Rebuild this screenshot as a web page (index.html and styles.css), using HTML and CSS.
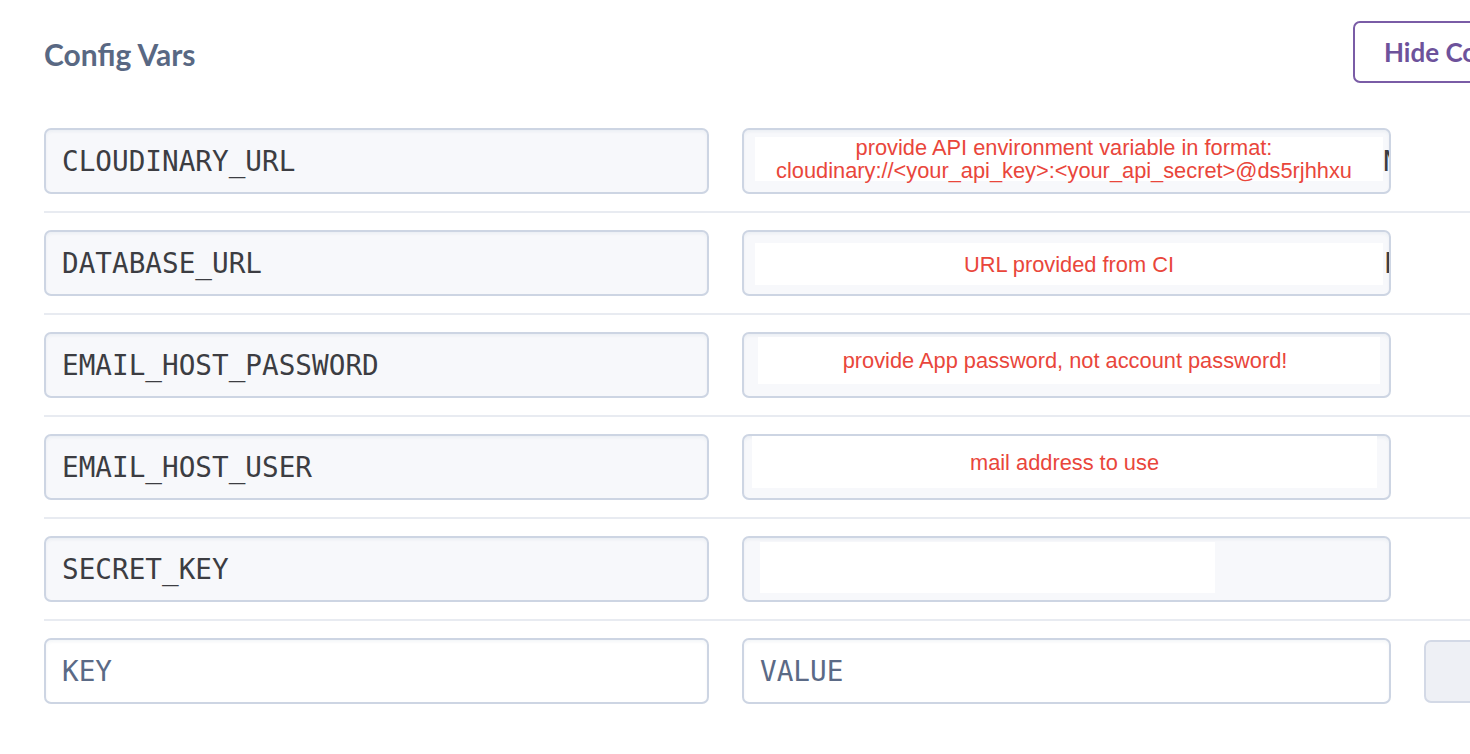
FILE: index.html
```html
<!DOCTYPE html>
<html lang="en">
<head>
<meta charset="utf-8">
<title>Config Vars</title>
<link rel="stylesheet" href="styles.css">
</head>
<body>
<section class="config">
  <header class="config-header">
    <h2 class="config-title">Config Vars</h2>
    <button class="hide-btn">Hide Config Vars</button>
  </header>

  <div class="var-row">
    <div class="field">CLOUDINARY_URL</div>
    <div class="field value">
      <span class="tail tail-1">N</span>
      <div class="note note-1">
        <span class="line">provide API environment variable in format:</span>
        <span class="line">cloudinary://&lt;your_api_key&gt;:&lt;your_api_secret&gt;@ds5rjhhxu</span>
      </div>
    </div>
  </div>

  <div class="var-row">
    <div class="field">DATABASE_URL</div>
    <div class="field value">
      <span class="tail tail-2">P</span>
      <div class="note note-2">URL provided from CI</div>
    </div>
  </div>

  <div class="var-row">
    <div class="field">EMAIL_HOST_PASSWORD</div>
    <div class="field value">
      <div class="note note-3">provide App password, not account password!</div>
    </div>
  </div>

  <div class="var-row">
    <div class="field">EMAIL_HOST_USER</div>
    <div class="field value">
      <div class="note note-4">mail address to use</div>
    </div>
  </div>

  <div class="var-row">
    <div class="field">SECRET_KEY</div>
    <div class="field value">
      <div class="note note-5"></div>
    </div>
  </div>

  <div class="var-row last">
    <div class="field empty">KEY</div>
    <div class="field empty">VALUE</div>
    <button class="add-btn">Add</button>
  </div>
</section>
</body>
</html>
```

FILE: styles.css
```css
html, body {
  margin: 0;
  padding: 0;
  background: #ffffff;
  overflow: hidden;
}

body {
  width: 1470px;
  height: 754px;
  font-family: Lato, "Open Sans", sans-serif;
}

.config {
  padding-left: 44px;
  width: 1640px;
}

.config-header {
  display: grid;
  grid-template-columns: 1309px auto;
  align-items: start;
  height: 111px;
}

.config-title {
  margin: 39px 0 0 0;
  font-family: Lato, "Open Sans", sans-serif;
  font-weight: 700;
  font-size: 30px;
  line-height: 30px;
  color: #596883;
}

.hide-btn {
  margin-top: 21px;
  height: 62px;
  box-sizing: border-box;
  border: 2px solid #7a5ca6;
  border-radius: 7px;
  background: #ffffff;
  padding: 0 30px 0 29px;
  font-family: Lato, "Open Sans", sans-serif;
  font-weight: 700;
  font-size: 26px;
  color: #6d529b;
  white-space: nowrap;
  text-align: left;
}

.var-row {
  display: grid;
  grid-template-columns: 665px 649px 160px;
  column-gap: 33px;
  align-items: center;
  padding: 17px 0;
  border-bottom: 2px solid #e8ebf1;
}

.var-row.last {
  border-bottom: none;
}

.field {
  position: relative;
  height: 66px;
  box-sizing: border-box;
  border: 2px solid #cdd5e3;
  border-radius: 7px;
  background: #f7f8fb;
  box-shadow: inset 0 2px 3px rgba(120, 135, 170, 0.08);
  display: flex;
  align-items: center;
  padding: 0 16px;
  overflow: hidden;
  white-space: nowrap;
  font-family: "DejaVu Sans Mono", "Liberation Mono", monospace;
  font-size: 27.7px;
  color: #3c3d42;
}

.field.empty {
  background: #ffffff;
  color: #5b6a86;
}

.tail {
  flex-shrink: 0;
}

.tail-1 {
  margin-left: 623px;
}

.tail-2 {
  margin-left: 624px;
}

.note {
  position: absolute;
  background: #ffffff;
  color: #e9463b;
  font-family: "Liberation Sans", Arial, sans-serif;
  font-size: 21.8px;
  line-height: 27px;
  display: flex;
  flex-direction: column;
  align-items: center;
  justify-content: center;
  text-align: center;
  white-space: nowrap;
}

.line {
  display: block;
}

.note-1 {
  left: 11px;
  top: 7px;
  width: 628px;
  height: 44px;
  padding-right: 10px;
  box-sizing: border-box;
  line-height: 23.5px;
}

.note-2 {
  left: 11px;
  top: 11px;
  width: 628px;
  height: 42px;
}

.note-3 {
  left: 14px;
  top: 3px;
  width: 622px;
  height: 47px;
  padding-right: 8px;
  box-sizing: border-box;
}

.note-4 {
  left: 8px;
  top: 0;
  width: 625px;
  height: 52px;
}

.note-5 {
  left: 16px;
  top: 4px;
  width: 455px;
  height: 51px;
}

.add-btn {
  height: 63px;
  box-sizing: border-box;
  border: 2px solid #d3d9e6;
  border-radius: 7px;
  background: #eef0f5;
  color: transparent;
  font-family: Lato, sans-serif;
  font-size: 20px;
}
```
